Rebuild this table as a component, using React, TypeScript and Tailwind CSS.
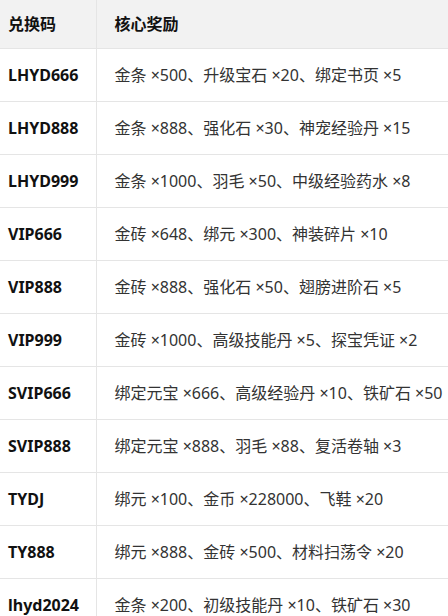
const rows: [string, string][] = [
  ["LHYD666", "金条 ×500、升级宝石 ×20、绑定书页 ×5"],
  ["LHYD888", "金条 ×888、强化石 ×30、神宠经验丹 ×15"],
  ["LHYD999", "金条 ×1000、羽毛 ×50、中级经验药水 ×8"],
  ["VIP666", "金砖 ×648、绑元 ×300、神装碎片 ×10"],
  ["VIP888", "金砖 ×888、强化石 ×50、翅膀进阶石 ×5"],
  ["VIP999", "金砖 ×1000、高级技能丹 ×5、探宝凭证 ×2"],
  ["SVIP666", "绑定元宝 ×666、高级经验丹 ×10、铁矿石 ×50"],
  ["SVIP888", "绑定元宝 ×888、羽毛 ×88、复活卷轴 ×3"],
  ["TYDJ", "绑元 ×100、金币 ×228000、飞鞋 ×20"],
  ["TY888", "绑元 ×888、金砖 ×500、材料扫荡令 ×20"],
  ["lhyd2024", "金条 ×200、初级技能丹 ×10、铁矿石 ×30"],
];

export default function App() {
  return (
    <div
      className="h-[616px] w-[448px] overflow-hidden bg-white text-[16px] text-[#333]"
      style={{ fontFamily: '"Noto Sans", "Noto Sans CJK SC", sans-serif' }}
    >
      <table className="w-[480px] table-fixed border-collapse">
        <colgroup>
          <col className="w-[96px]" />
          <col />
        </colgroup>
        <thead>
          <tr className="h-[48px] bg-[#f2f2f2]">
            <th className="border-r border-b border-[#e5e5e5] pl-2 text-left font-bold text-[#111]">兑换码</th>
            <th className="border-b border-[#e5e5e5] pl-[18px] text-left font-bold text-[#111]">核心奖励</th>
          </tr>
        </thead>
        <tbody>
          {rows.map(([code, reward]) => (
            <tr key={code} className="h-[53px]">
              <td className="border-r border-b border-[#e5e5e5] pl-2 font-bold whitespace-nowrap text-[#111]">{code}</td>
              <td className="border-b border-[#e5e5e5] pl-[18px] whitespace-nowrap">{reward}</td>
            </tr>
          ))}
        </tbody>
      </table>
    </div>
  );
}
